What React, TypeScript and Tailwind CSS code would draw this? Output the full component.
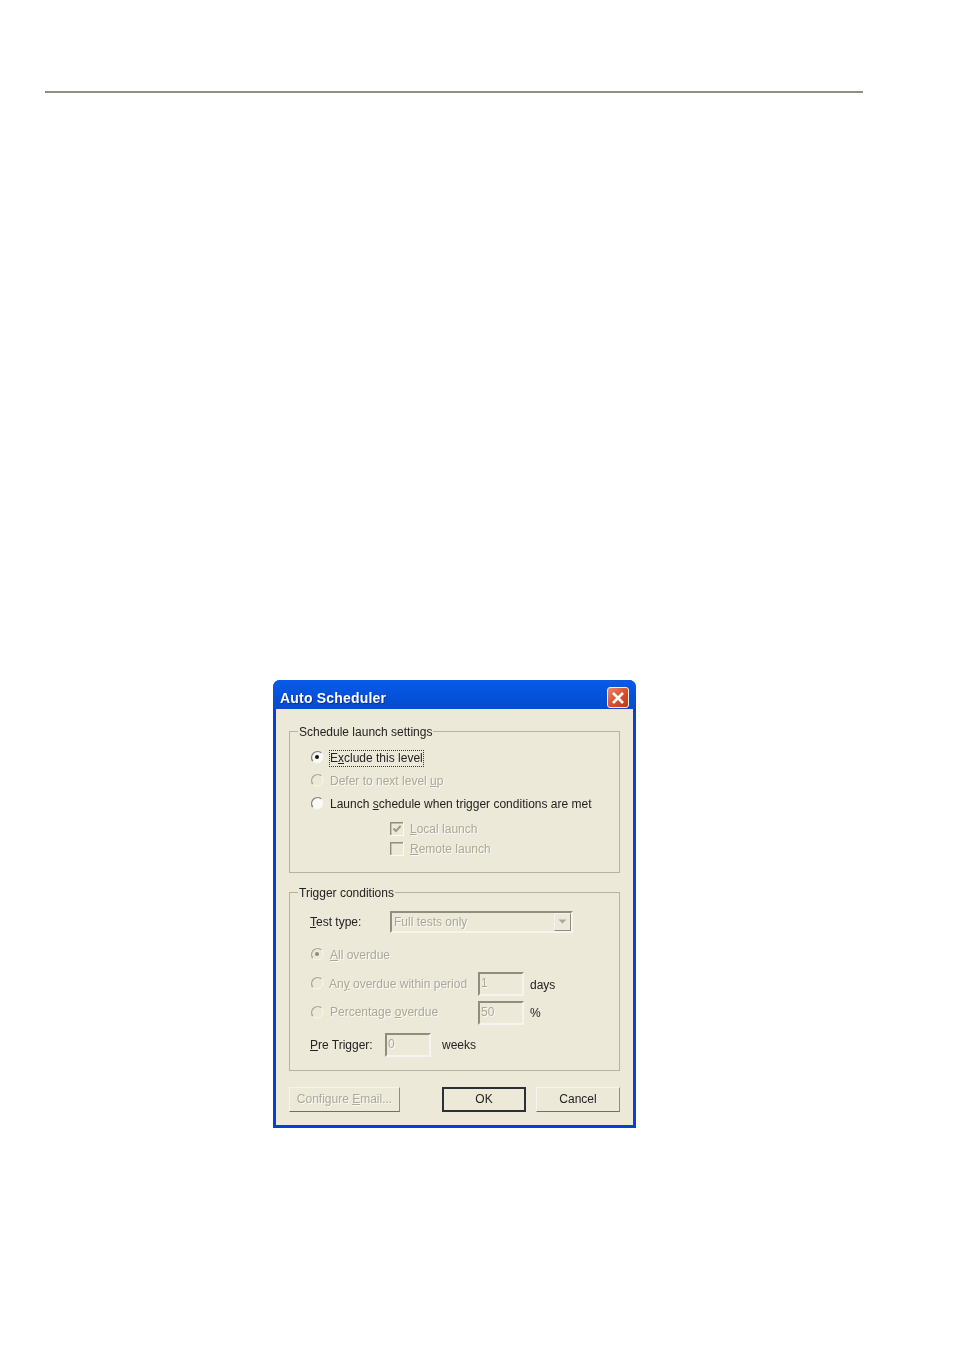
import type { ReactNode } from "react";

const disabledText = "text-[#aca899] [text-shadow:1px_1px_0_#fbfaf5]";

function Radio({ checked, disabled }: { checked?: boolean; disabled?: boolean }) {
  return (
    <svg width="14" height="14" viewBox="0 0 14 14" className="shrink-0 -translate-y-[1px]">
      <circle cx="7" cy="7" r="6" fill={disabled ? "#ece9d8" : "#fbfaf6"} stroke="#f8f6ee" strokeWidth="1" />
      <path d="M2.8 11.2A6 6 0 0 1 11.2 2.8" fill="none" stroke={disabled ? "#aca899" : "#85847a"} strokeWidth="1.4" />
      {checked && <circle cx="7" cy="7" r="2" fill={disabled ? "#8f8c7e" : "#111111"} />}
    </svg>
  );
}

function Check({ checked }: { checked?: boolean }) {
  return (
    <svg width="14" height="14" viewBox="0 0 14 14" className="shrink-0">
      <rect x="0.5" y="0.5" width="13" height="13" fill="#ece9d8" stroke="#fbfaf5" />
      <path d="M0.7 13V0.7H13" fill="none" stroke="#8f8d80" strokeWidth="1.4" />
      {checked && <path d="M3.5 6.5l2.5 2.6 4.6-5.2" fill="none" stroke="#9b9888" strokeWidth="2" />}
    </svg>
  );
}

function Sunken({ value, className }: { value: string; className: string }) {
  return (
    <div className={`${className} flex h-[24px] items-start border-2 border-t-[#8f8d80] border-l-[#8f8d80] border-r-[#f6f4ec] border-b-[#f6f4ec] bg-[#ece9d8] pl-[1px] pt-[1px] text-[12px] leading-[16px] ${disabledText}`}>
      {value}
    </div>
  );
}

function GroupBox({ title, className, children }: { title: string; className: string; children: ReactNode }) {
  return (
    <div className={`relative border border-[#b4b2a3] ${className}`}>
      <span className="absolute left-[8px] top-[-7px] bg-[#ece9d8] px-[1px] text-[12px] leading-[15px] text-[#222222]">{title}</span>
      {children}
    </div>
  );
}

function RadioRow({ checked, disabled, children, className }: { checked?: boolean; disabled?: boolean; children: ReactNode; className: string }) {
  return (
    <div className={`flex items-center ${className}`}>
      <Radio checked={checked} disabled={disabled} />
      {children}
    </div>
  );
}

function Button({ children, className }: { children: ReactNode; className: string }) {
  return (
    <button type="button" className={`h-[25px] bg-[#ece9d8] text-[12px] leading-[15px] ${className}`}>
      {children}
    </button>
  );
}

const raised = "border border-t-[#f6f4ec] border-l-[#f6f4ec] border-r-[#8f8d80] border-b-[#716f64]";

export default function App() {
  return (
    <div className="min-h-[1351px] bg-white pl-[45px] pt-[91px] [font-family:'Liberation_Sans',Arial,sans-serif]">
      <div className="h-[2px] w-[818px] bg-[#8e8e86]" />

      <div className="ml-[228px] mt-[587px] flex h-[448px] w-[363px] flex-col overflow-hidden rounded-t-[7px] bg-[#0a3fd6] blur-[0.4px]">
        <div className="flex h-[29px] shrink-0 items-center justify-between bg-gradient-to-b from-[#0a5ae8] via-[#0353dc] to-[#0a49d0] pl-[7px] pr-[7px] pt-[6px]">
          <span className="text-[14px] font-bold leading-[18px] tracking-[0.2px] text-white [text-shadow:1px_1px_0_#0a2f98]">Auto Scheduler</span>
          <div className="flex h-[21px] w-[22px] items-center justify-center rounded-[3px] border border-[#f3f0ea] bg-gradient-to-br from-[#e98a6c] via-[#d9502c] to-[#b83a18]">
            <svg width="14" height="14" viewBox="0 0 14 14">
              <path d="M2 2l10 10M12 2L2 12" stroke="#ffffff" strokeWidth="2.6" />
            </svg>
          </div>
        </div>

        <div className="mx-[3px] mb-[3px] flex flex-1 flex-col bg-[#ece9d8] pl-[13px] pr-[13px] pt-[22px]">
          <GroupBox title="Schedule launch settings" className="h-[142px] w-[331px] shrink-0 pl-[20px] pt-[14px]">
            <RadioRow checked className="h-[23px]">
              <span className="ml-[5px] mt-[2px] border border-dotted border-[#333333] text-[12px] leading-[15px] text-[#222222]">
                E<u>x</u>clude this level
              </span>
            </RadioRow>
            <RadioRow disabled className="h-[23px]">
              <span className={`ml-[6px] text-[12px] ${disabledText}`}>
                Defer to next level <u>u</u>p
              </span>
            </RadioRow>
            <RadioRow className="h-[23px]">
              <span className="ml-[6px] text-[12px] text-[#222222]">
                Launch <u>s</u>chedule when trigger conditions are met
              </span>
            </RadioRow>
            <div className="ml-[80px] mt-[4px] flex h-[20px] items-center">
              <Check checked />
              <span className={`ml-[6px] text-[12px] ${disabledText}`}>
                <u>L</u>ocal launch
              </span>
            </div>
            <div className="ml-[80px] flex h-[20px] items-center">
              <Check />
              <span className={`ml-[6px] text-[12px] ${disabledText}`}>
                <u>R</u>emote launch
              </span>
            </div>
          </GroupBox>

          <GroupBox title="Trigger conditions" className="mt-[19px] h-[179px] w-[331px] shrink-0 pl-[20px] pt-[17px]">
            <div className="flex h-[23px] items-center">
              <span className="w-[80px] text-[12px] text-[#222222]">
                <u>T</u>est type:
              </span>
              <div className={`flex h-[22px] w-[183px] items-center justify-between border-2 border-t-[#8f8d80] border-l-[#8f8d80] border-r-[#f6f4ec] border-b-[#f6f4ec] pl-[2px] text-[12px] ${disabledText}`}>
                Full tests only
                <div className="flex h-[18px] w-[17px] items-center justify-center border border-t-[#f6f4ec] border-l-[#f6f4ec] border-r-[#8f8d80] border-b-[#8f8d80]">
                  <svg width="9" height="5" viewBox="0 0 9 5">
                    <path d="M0.5 0.5h8L4.5 4.5z" fill="#aca899" />
                  </svg>
                </div>
              </div>
            </div>
            <RadioRow checked disabled className="mt-[11px] h-[22px]">
              <span className={`ml-[6px] text-[12px] ${disabledText}`}>
                <u>A</u>ll overdue
              </span>
            </RadioRow>
            <RadioRow disabled className="mt-[6px] h-[24px]">
              <span className={`ml-[5px] w-[149px] text-[12px] ${disabledText}`}>
                An<u>y</u> overdue within period
              </span>
              <Sunken value="1" className="w-[46px]" />
              <span className="ml-[6px] mt-[1px] text-[12px] text-[#222222]">days</span>
            </RadioRow>
            <RadioRow disabled className="mt-[4px] h-[25px]">
              <span className={`mb-[2px] ml-[6px] w-[148px] text-[12px] ${disabledText}`}>
                Percentage <u>o</u>verdue
              </span>
              <Sunken value="50" className="w-[46px]" />
              <span className="ml-[6px] mt-[1px] text-[12px] text-[#222222]">%</span>
            </RadioRow>
            <div className="mt-[7px] flex h-[25px] items-center">
              <span className="w-[75px] text-[12px] text-[#222222]">
                <u>P</u>re Trigger:
              </span>
              <Sunken value="0" className="w-[46px]" />
              <span className="ml-[11px] text-[12px] text-[#222222]">weeks</span>
            </div>
          </GroupBox>

          <div className="mt-[16px] flex w-[331px]">
            <Button className={`w-[111px] ${raised} ${disabledText}`}>
              Configure <u>E</u>mail...
            </Button>
            <Button className="ml-[42px] w-[84px] border-2 border-[#2a2f38] text-[#222222]">OK</Button>
            <Button className={`ml-[10px] w-[84px] ${raised} text-[#222222]`}>Cancel</Button>
          </div>
        </div>
      </div>
    </div>
  );
}
